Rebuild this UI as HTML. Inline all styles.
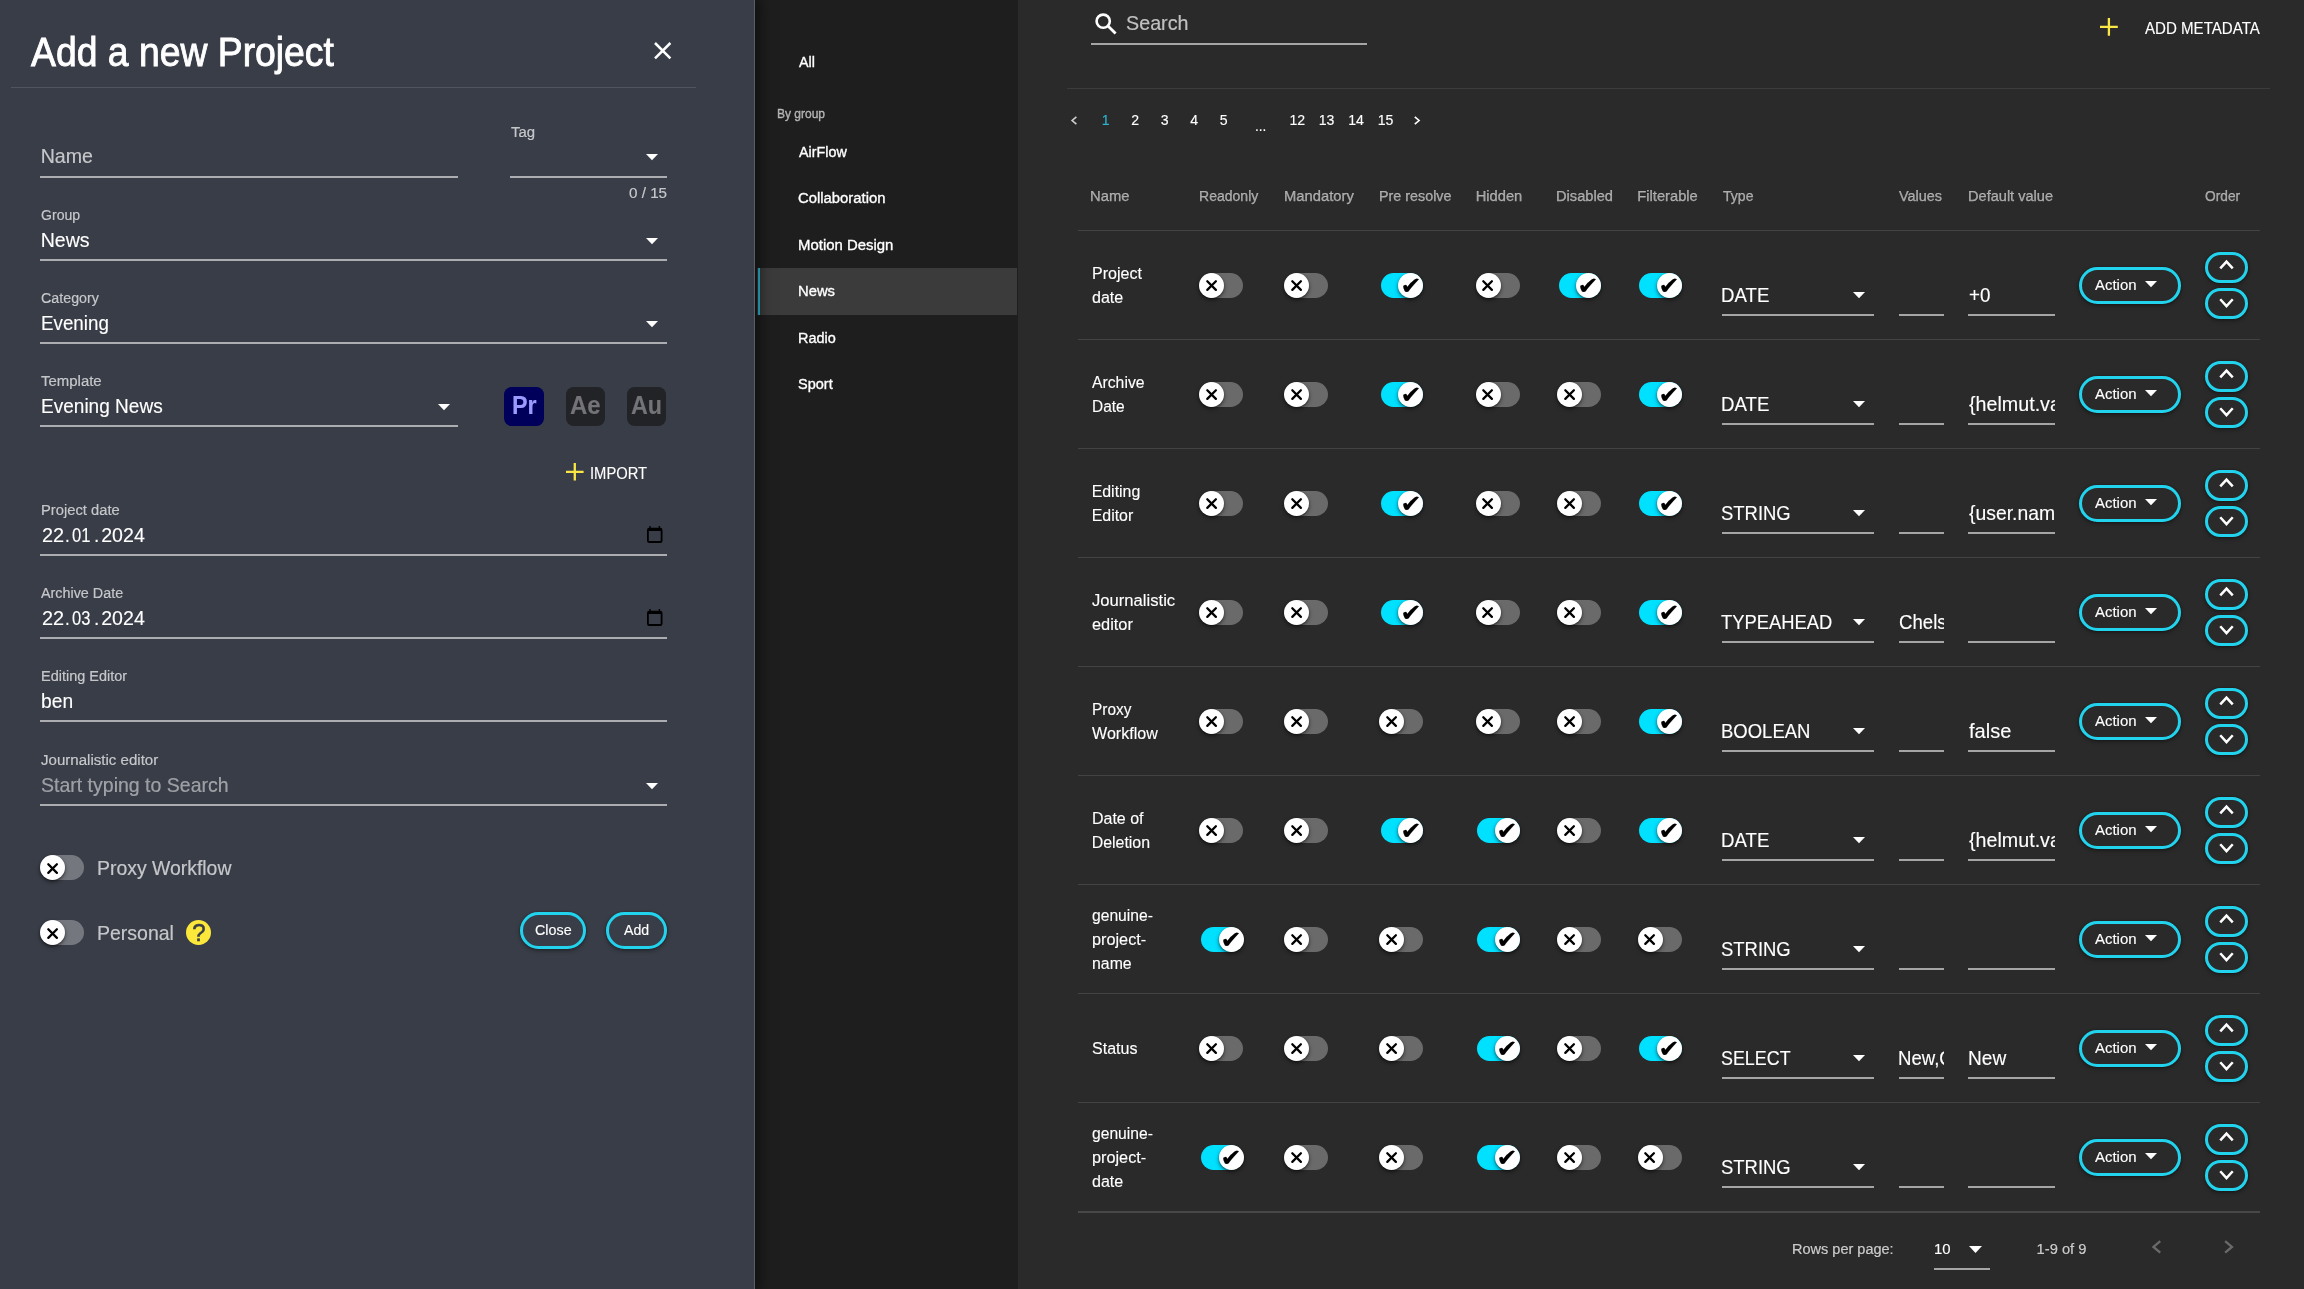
<!DOCTYPE html>
<html lang="en"><head><meta charset="utf-8"><title>Add a new Project</title>
<style>
html,body{margin:0;padding:0;background:#2a2a2a;}
body{width:2304px;height:1289px;position:relative;overflow:hidden;font-family:"Liberation Sans",sans-serif;}
.b{position:absolute;display:block;}
.t{position:absolute;white-space:nowrap;line-height:1;transform-origin:0 50%;-webkit-text-stroke:.12px currentColor;}
#w{position:absolute;left:0;top:0;width:2304px;height:1289px;overflow:hidden;will-change:transform;}
.g{font-family:"DejaVu Sans",sans-serif;}
svg{overflow:visible}
</style></head>
<body>
<div id="w">
<div class="b" style="left:0.00px;top:0.00px;width:2304.00px;height:1289.00px;background:#2a2a2a;"></div>
<div class="b" style="left:755.00px;top:0.00px;width:262.50px;height:1289.00px;background:#1e1e1e;"></div>
<div class="b" style="left:757.30px;top:268.00px;width:260.20px;height:46.70px;background:#3b3b3b;"></div>
<div class="b" style="left:757.80px;top:268.00px;width:2.50px;height:46.70px;background:#2dbcd8;"></div>
<div class="b" style="left:0.00px;top:0.00px;width:754.30px;height:1289.00px;background:#393d47;box-shadow:0 0 14px 4px rgba(0,0,0,.55);border-right:1px solid #5b5e66;"></div>
<span class="t" style="left:30.60px;top:32.00px;font-size:40.8px;color:#fff;transform:scaleX(0.9148);-webkit-text-stroke:0.9px #fff;">Add a new Project</span>
<svg class="b" style="left:653.50px;top:42.30px;" width="17.40" height="17.40" viewBox="0 0 17.40 17.40"><path d="M1 1L16.4 16.4M16.4 1L1 16.4" stroke="#fff" stroke-width="2.5" fill="none"/></svg>
<div class="b" style="left:11.00px;top:87.00px;width:685.00px;height:1.00px;background:rgba(255,255,255,.12);"></div>
<div class="b" style="left:40.00px;top:176.00px;width:418.00px;height:2.00px;background:rgba(255,255,255,.58);"></div>
<span class="t" style="left:40.67px;top:147.00px;font-size:19.58px;color:rgba(255,255,255,.7);">Name</span>
<div class="b" style="left:510.00px;top:176.00px;width:157.00px;height:2.00px;background:rgba(255,255,255,.58);"></div>
<span class="t" style="left:511.10px;top:125.00px;font-size:14.69px;color:rgba(255,255,255,.7);transform:scaleX(1.0189);">Tag</span>
<svg class="b" style="left:646.20px;top:153.95px" width="12" height="6.3" viewBox="0 0 12 6.3"><path d="M0 0H12L6.0 6.3Z" fill="#fff"/></svg>
<span class="t" style="left:629.17px;top:186.00px;font-size:14.69px;color:rgba(255,255,255,.7);transform:scaleX(1.0358);">0 / 15</span>
<div class="b" style="left:40.00px;top:259.00px;width:627.00px;height:2.00px;background:rgba(255,255,255,.58);"></div>
<span class="t" style="left:40.86px;top:208.00px;font-size:14.69px;color:rgba(255,255,255,.7);transform:scaleX(0.9600);">Group</span>
<span class="t" style="left:40.67px;top:231.00px;font-size:19.58px;color:#fff;">News</span>
<svg class="b" style="left:646.20px;top:237.55px" width="12" height="6.3" viewBox="0 0 12 6.3"><path d="M0 0H12L6.0 6.3Z" fill="#fff"/></svg>
<div class="b" style="left:40.00px;top:342.00px;width:627.00px;height:2.00px;background:rgba(255,255,255,.58);"></div>
<span class="t" style="left:40.85px;top:291.00px;font-size:14.69px;color:rgba(255,255,255,.7);transform:scaleX(0.9716);">Category</span>
<span class="t" style="left:40.73px;top:314.00px;font-size:19.58px;color:#fff;transform:scaleX(0.9592);">Evening</span>
<svg class="b" style="left:646.20px;top:320.55px" width="12" height="6.3" viewBox="0 0 12 6.3"><path d="M0 0H12L6.0 6.3Z" fill="#fff"/></svg>
<div class="b" style="left:40.00px;top:425.00px;width:418.00px;height:2.00px;background:rgba(255,255,255,.58);"></div>
<span class="t" style="left:40.76px;top:374.00px;font-size:14.69px;color:rgba(255,255,255,.7);transform:scaleX(1.0180);">Template</span>
<span class="t" style="left:40.71px;top:397.00px;font-size:19.58px;color:#fff;transform:scaleX(0.9723);">Evening News</span>
<svg class="b" style="left:437.70px;top:403.55px" width="12" height="6.3" viewBox="0 0 12 6.3"><path d="M0 0H12L6.0 6.3Z" fill="#fff"/></svg>
<div class="b" style="left:504.10px;top:387.00px;width:39.60px;height:38.50px;background:#00005b;border-radius:7.5px;"></div>
<span class="t" style="left:512.08px;top:393.00px;font-size:25.6px;color:#9b9bff;transform:scaleX(0.9135);font-weight:700;">Pr</span>
<div class="b" style="left:565.60px;top:387.00px;width:39.20px;height:38.50px;background:#222327;border-radius:7.5px;"></div>
<span class="t" style="left:569.90px;top:393.00px;font-size:25.6px;color:#737378;transform:scaleX(0.9381);font-weight:700;">Ae</span>
<div class="b" style="left:626.60px;top:387.00px;width:39.20px;height:38.50px;background:#222327;border-radius:7.5px;"></div>
<span class="t" style="left:630.62px;top:393.00px;font-size:25.6px;color:#737378;transform:scaleX(0.9104);font-weight:700;">Au</span>
<svg class="b" style="left:566.20px;top:462.50px;" width="17.60" height="17.60" viewBox="0 0 17.60 17.60"><path d="M8.8 0V17.6M0 8.8H17.6" stroke="#f8e745" stroke-width="2.3" fill="none"/></svg>
<span class="t" style="left:590.17px;top:465.00px;font-size:16.12px;color:#fff;transform:scaleX(0.9157);">IMPORT</span>
<div class="b" style="left:40.00px;top:554.00px;width:627.00px;height:2.00px;background:rgba(255,255,255,.58);"></div>
<span class="t" style="left:40.67px;top:503.00px;font-size:14.69px;color:rgba(255,255,255,.7);transform:scaleX(1.0044);">Project date</span>
<span class="t" style="left:41.90px;top:526.00px;font-size:19.58px;color:#fff;transform:scaleX(1.0164);">22</span>
<span class="t" style="left:65.47px;top:526.00px;font-size:19.58px;color:#fff;transform:scaleX(0.8682);">.</span>
<span class="t" style="left:71.82px;top:526.00px;font-size:19.58px;color:#fff;transform:scaleX(0.8479);">01</span>
<span class="t" style="left:94.39px;top:526.00px;font-size:19.58px;color:#fff;transform:scaleX(0.9704);">.</span>
<span class="t" style="left:101.22px;top:526.00px;font-size:19.58px;color:#fff;">2024</span>
<svg class="b" style="left:647.30px;top:526.00px;" width="15.50" height="17.00" viewBox="0 0 15.50 17.00"><path fill-rule="evenodd" fill="#000" d="M2.2 1.7H13.3A2.2 2.2 0 0 1 15.5 3.9V14.7A2.2 2.2 0 0 1 13.3 16.9H2.2A2.2 2.2 0 0 1 0 14.7V3.9A2.2 2.2 0 0 1 2.2 1.7ZM1.8 5V14.6A.5 .5 0 0 0 2.3 15.1H13.2A.5 .5 0 0 0 13.7 14.6V5Z"/><path d="M2.3 0H3.7V2.5H2.3ZM11.7 0H13.1V2.5H11.7Z" fill="#000"/></svg>
<div class="b" style="left:40.00px;top:637.00px;width:627.00px;height:2.00px;background:rgba(255,255,255,.58);"></div>
<span class="t" style="left:40.92px;top:586.00px;font-size:14.69px;color:rgba(255,255,255,.7);transform:scaleX(0.9769);">Archive Date</span>
<span class="t" style="left:41.90px;top:609.00px;font-size:19.58px;color:#fff;transform:scaleX(1.0164);">22</span>
<span class="t" style="left:65.47px;top:609.00px;font-size:19.58px;color:#fff;transform:scaleX(0.8682);">.</span>
<span class="t" style="left:71.82px;top:609.00px;font-size:19.58px;color:#fff;transform:scaleX(0.8438);">03</span>
<span class="t" style="left:94.39px;top:609.00px;font-size:19.58px;color:#fff;transform:scaleX(0.9704);">.</span>
<span class="t" style="left:101.22px;top:609.00px;font-size:19.58px;color:#fff;">2024</span>
<svg class="b" style="left:647.30px;top:609.00px;" width="15.50" height="17.00" viewBox="0 0 15.50 17.00"><path fill-rule="evenodd" fill="#000" d="M2.2 1.7H13.3A2.2 2.2 0 0 1 15.5 3.9V14.7A2.2 2.2 0 0 1 13.3 16.9H2.2A2.2 2.2 0 0 1 0 14.7V3.9A2.2 2.2 0 0 1 2.2 1.7ZM1.8 5V14.6A.5 .5 0 0 0 2.3 15.1H13.2A.5 .5 0 0 0 13.7 14.6V5Z"/><path d="M2.3 0H3.7V2.5H2.3ZM11.7 0H13.1V2.5H11.7Z" fill="#000"/></svg>
<div class="b" style="left:40.00px;top:720.00px;width:627.00px;height:2.00px;background:rgba(255,255,255,.58);"></div>
<span class="t" style="left:40.69px;top:669.00px;font-size:14.69px;color:rgba(255,255,255,.7);transform:scaleX(0.9865);">Editing Editor</span>
<span class="t" style="left:40.79px;top:692.00px;font-size:19.58px;color:#fff;transform:scaleX(0.9835);">ben</span>
<div class="b" style="left:40.00px;top:804.00px;width:627.00px;height:2.00px;background:rgba(255,255,255,.58);"></div>
<span class="t" style="left:40.83px;top:753.00px;font-size:14.69px;color:rgba(255,255,255,.7);transform:scaleX(1.0256);">Journalistic editor</span>
<span class="t" style="left:40.59px;top:776.00px;font-size:19.58px;color:rgba(255,255,255,.5);transform:scaleX(0.9964);">Start typing to Search</span>
<svg class="b" style="left:646.20px;top:782.55px" width="12" height="6.3" viewBox="0 0 12 6.3"><path d="M0 0H12L6.0 6.3Z" fill="#fff"/></svg>
<div class="b" style="left:41.00px;top:855.40px;width:43.00px;height:24.60px;background:rgba(255,255,255,.3);border-radius:13px;"></div>
<div class="b" style="left:40.10px;top:855.20px;width:25.00px;height:25.00px;background:#fff;border-radius:50%;box-shadow:0 2px 4px rgba(0,0,0,.45),0 1px 2px rgba(0,0,0,.3);"></div>
<svg class="b" style="left:46.70px;top:862.60px;" width="11.20" height="11.20" viewBox="0 0 11.20 11.20"><path d="M1.3 1.3L9.9 9.9M9.9 1.3L1.3 9.9" stroke="#000" stroke-width="2.3" stroke-linecap="round" fill="none"/></svg>
<span class="t" style="left:96.65px;top:859.00px;font-size:19.58px;color:rgba(255,255,255,.7);transform:scaleX(0.9909);">Proxy Workflow</span>
<div class="b" style="left:41.00px;top:920.40px;width:43.00px;height:24.60px;background:rgba(255,255,255,.3);border-radius:13px;"></div>
<div class="b" style="left:40.10px;top:920.20px;width:25.00px;height:25.00px;background:#fff;border-radius:50%;box-shadow:0 2px 4px rgba(0,0,0,.45),0 1px 2px rgba(0,0,0,.3);"></div>
<svg class="b" style="left:46.70px;top:927.60px;" width="11.20" height="11.20" viewBox="0 0 11.20 11.20"><path d="M1.3 1.3L9.9 9.9M9.9 1.3L1.3 9.9" stroke="#000" stroke-width="2.3" stroke-linecap="round" fill="none"/></svg>
<span class="t" style="left:96.64px;top:924.00px;font-size:19.58px;color:rgba(255,255,255,.7);transform:scaleX(0.9959);">Personal</span>
<div class="b" style="left:186.30px;top:919.80px;width:25.00px;height:25.00px;background:#fbe83a;border-radius:50%;"></div>
<span class="t" style="left:192.19px;top:921.00px;font-size:23.97px;color:#393d47;-webkit-text-stroke:0.5px #393d47;">?</span>
<div class="b" style="left:519.90px;top:911.60px;width:66.60px;height:37.50px;background:transparent;border:3px solid #22d3ee;border-radius:18.8px;box-sizing:border-box;box-shadow:0 2px 4px rgba(0,0,0,.35),0 0 2px rgba(0,0,0,.4);"></div>
<span class="t" style="left:535.08px;top:923.00px;font-size:14.69px;color:#fff;transform:scaleX(0.9748);">Close</span>
<div class="b" style="left:606.00px;top:911.60px;width:61.20px;height:37.50px;background:transparent;border:3px solid #22d3ee;border-radius:18.8px;box-sizing:border-box;box-shadow:0 2px 4px rgba(0,0,0,.35),0 0 2px rgba(0,0,0,.4);"></div>
<span class="t" style="left:624.40px;top:923.00px;font-size:14.69px;color:#fff;transform:scaleX(0.9657);">Add</span>
<span class="t" style="left:799.00px;top:54.00px;font-size:14.99px;color:#fff;transform:scaleX(0.9576);-webkit-text-stroke:0.35px #fff;">All</span>
<span class="t" style="left:777.24px;top:107.00px;font-size:13.46px;color:rgba(255,255,255,.58);transform:scaleX(0.8923);-webkit-text-stroke:0.35px rgba(255,255,255,.58);">By group</span>
<span class="t" style="left:799.00px;top:144.00px;font-size:14.99px;color:#fff;transform:scaleX(0.9562);-webkit-text-stroke:0.35px #fff;">AirFlow</span>
<span class="t" style="left:798.26px;top:190.00px;font-size:14.99px;color:#fff;transform:scaleX(0.9903);-webkit-text-stroke:0.35px #fff;">Collaboration</span>
<span class="t" style="left:797.81px;top:237.00px;font-size:14.99px;color:#fff;transform:scaleX(0.9959);-webkit-text-stroke:0.35px #fff;">Motion Design</span>
<span class="t" style="left:797.82px;top:283.00px;font-size:14.99px;color:#fff;transform:scaleX(0.9874);-webkit-text-stroke:0.35px #fff;">News</span>
<span class="t" style="left:797.84px;top:330.00px;font-size:14.99px;color:#fff;transform:scaleX(0.9645);-webkit-text-stroke:0.35px #fff;">Radio</span>
<span class="t" style="left:798.35px;top:376.00px;font-size:14.99px;color:#fff;transform:scaleX(0.9685);-webkit-text-stroke:0.35px #fff;">Sport</span>
<svg class="b" style="left:1094.50px;top:12.80px;" width="22.00" height="22.00" viewBox="0 0 22.00 22.00"><circle cx="8.2" cy="8.2" r="6.6" fill="none" stroke="#fff" stroke-width="2.6"/><path d="M13 13L20.6 20.6" stroke="#fff" stroke-width="2.8"/></svg>
<span class="t" style="left:1126.01px;top:14.00px;font-size:19.58px;color:rgba(255,255,255,.7);transform:scaleX(1.0081);">Search</span>
<div class="b" style="left:1091.00px;top:43.00px;width:276.00px;height:2.00px;background:rgba(255,255,255,.58);"></div>
<svg class="b" style="left:2100.40px;top:18.10px;" width="17.80" height="17.80" viewBox="0 0 17.80 17.80"><path d="M8.9 0V17.8M0 8.9H17.8" stroke="#f8e745" stroke-width="2.3" fill="none"/></svg>
<span class="t" style="left:2144.60px;top:21.00px;font-size:15.81px;color:#fff;transform:scaleX(0.9550);">ADD METADATA</span>
<div class="b" style="left:1067.00px;top:88.00px;width:1203.00px;height:1.00px;background:rgba(255,255,255,.085);"></div>
<svg class="b" style="left:1071.10px;top:115.90px;" width="6.20" height="9.00" viewBox="0 0 6.20 9.00"><path d="M5.40 0.80L1.10 4.50L5.40 8.20" fill="none" stroke="#cfcfcf" stroke-width="1.6"/></svg>
<svg class="b" style="left:1414.00px;top:115.90px;" width="6.20" height="9.00" viewBox="0 0 6.20 9.00"><path d="M0.80 0.80L5.10 4.50L0.80 8.20" fill="none" stroke="#fff" stroke-width="1.6"/></svg>
<span class="t" style="left:1101.68px;top:113.00px;font-size:14.08px;color:#2cb5d2;">1</span>
<span class="t" style="left:1131.36px;top:113.00px;font-size:14.08px;color:#fff;">2</span>
<span class="t" style="left:1160.83px;top:113.00px;font-size:14.08px;color:#fff;">3</span>
<span class="t" style="left:1190.33px;top:113.00px;font-size:14.08px;color:#fff;">4</span>
<span class="t" style="left:1219.79px;top:113.00px;font-size:14.08px;color:#fff;">5</span>
<span class="t" style="left:1289.47px;top:113.00px;font-size:14.08px;color:#fff;">12</span>
<span class="t" style="left:1318.64px;top:113.00px;font-size:14.08px;color:#fff;">13</span>
<span class="t" style="left:1348.13px;top:113.00px;font-size:14.08px;color:#fff;">14</span>
<span class="t" style="left:1377.74px;top:113.00px;font-size:14.08px;color:#fff;">15</span>
<span class="t" style="left:1254.98px;top:119.00px;font-size:14.08px;color:#fff;transform:scaleX(0.9650);">...</span>
<span class="t" style="left:1089.82px;top:189.00px;font-size:14.69px;color:rgba(255,255,255,.55);transform:scaleX(1.0057);-webkit-text-stroke:0.25px rgba(255,255,255,.55);">Name</span>
<span class="t" style="left:1199.28px;top:189.00px;font-size:14.69px;color:rgba(255,255,255,.55);transform:scaleX(0.9558);-webkit-text-stroke:0.25px rgba(255,255,255,.55);">Readonly</span>
<span class="t" style="left:1283.72px;top:189.00px;font-size:14.69px;color:rgba(255,255,255,.55);transform:scaleX(1.0053);-webkit-text-stroke:0.25px rgba(255,255,255,.55);">Mandatory</span>
<span class="t" style="left:1378.75px;top:189.00px;font-size:14.69px;color:rgba(255,255,255,.55);transform:scaleX(0.9752);-webkit-text-stroke:0.25px rgba(255,255,255,.55);">Pre resolve</span>
<span class="t" style="left:1475.72px;top:189.00px;font-size:14.69px;color:rgba(255,255,255,.55);-webkit-text-stroke:0.25px rgba(255,255,255,.55);">Hidden</span>
<span class="t" style="left:1556.23px;top:189.00px;font-size:14.69px;color:rgba(255,255,255,.55);transform:scaleX(0.9966);-webkit-text-stroke:0.25px rgba(255,255,255,.55);">Disabled</span>
<span class="t" style="left:1637.33px;top:189.00px;font-size:14.69px;color:rgba(255,255,255,.55);-webkit-text-stroke:0.25px rgba(255,255,255,.55);">Filterable</span>
<span class="t" style="left:1722.92px;top:189.00px;font-size:14.69px;color:rgba(255,255,255,.55);transform:scaleX(0.9572);-webkit-text-stroke:0.25px rgba(255,255,255,.55);">Type</span>
<span class="t" style="left:1899.33px;top:189.00px;font-size:14.69px;color:rgba(255,255,255,.55);transform:scaleX(0.9801);-webkit-text-stroke:0.25px rgba(255,255,255,.55);">Values</span>
<span class="t" style="left:1968.33px;top:189.00px;font-size:14.69px;color:rgba(255,255,255,.55);transform:scaleX(0.9922);-webkit-text-stroke:0.25px rgba(255,255,255,.55);">Default value</span>
<span class="t" style="left:2204.78px;top:189.00px;font-size:14.69px;color:rgba(255,255,255,.55);transform:scaleX(0.9367);-webkit-text-stroke:0.25px rgba(255,255,255,.55);">Order</span>
<div class="b" style="left:1078.00px;top:230.00px;width:1182.00px;height:1.00px;background:rgba(255,255,255,.12);"></div>
<div class="b" style="left:1078.00px;top:339.00px;width:1182.00px;height:1.00px;background:rgba(255,255,255,.12);"></div>
<span class="t" style="left:1091.66px;top:266.00px;font-size:15.91px;color:#fff;transform:scaleX(1.0103);">Project</span>
<span class="t" style="left:1091.76px;top:290.00px;font-size:15.91px;color:#fff;transform:scaleX(1.0086);">date</span>
<div class="b" style="left:1200.30px;top:273.00px;width:43.00px;height:24.60px;background:rgba(255,255,255,.3);border-radius:13px;"></div>
<div class="b" style="left:1199.40px;top:272.80px;width:25.00px;height:25.00px;background:#fff;border-radius:50%;box-shadow:0 2px 4px rgba(0,0,0,.45),0 1px 2px rgba(0,0,0,.3);"></div>
<svg class="b" style="left:1206.00px;top:280.20px;" width="11.20" height="11.20" viewBox="0 0 11.20 11.20"><path d="M1.3 1.3L9.9 9.9M9.9 1.3L1.3 9.9" stroke="#000" stroke-width="2.3" stroke-linecap="round" fill="none"/></svg>
<div class="b" style="left:1285.00px;top:273.00px;width:43.00px;height:24.60px;background:rgba(255,255,255,.3);border-radius:13px;"></div>
<div class="b" style="left:1284.10px;top:272.80px;width:25.00px;height:25.00px;background:#fff;border-radius:50%;box-shadow:0 2px 4px rgba(0,0,0,.45),0 1px 2px rgba(0,0,0,.3);"></div>
<svg class="b" style="left:1290.70px;top:280.20px;" width="11.20" height="11.20" viewBox="0 0 11.20 11.20"><path d="M1.3 1.3L9.9 9.9M9.9 1.3L1.3 9.9" stroke="#000" stroke-width="2.3" stroke-linecap="round" fill="none"/></svg>
<div class="b" style="left:1380.80px;top:272.70px;width:42.20px;height:25.20px;background:#00e0ff;border-radius:13px;"></div>
<div class="b" style="left:1398.20px;top:272.80px;width:25.00px;height:25.00px;background:#fff;border-radius:50%;box-shadow:0 2px 4px rgba(0,0,0,.45),0 1px 2px rgba(0,0,0,.3);"></div>
<span class="t g" style="left:1400.60px;top:273.70px;font-size:24px;color:#000;transform-origin:50% 50%;transform:scaleX(1.07)">✔</span>
<div class="b" style="left:1476.60px;top:273.00px;width:43.00px;height:24.60px;background:rgba(255,255,255,.3);border-radius:13px;"></div>
<div class="b" style="left:1475.70px;top:272.80px;width:25.00px;height:25.00px;background:#fff;border-radius:50%;box-shadow:0 2px 4px rgba(0,0,0,.45),0 1px 2px rgba(0,0,0,.3);"></div>
<svg class="b" style="left:1482.30px;top:280.20px;" width="11.20" height="11.20" viewBox="0 0 11.20 11.20"><path d="M1.3 1.3L9.9 9.9M9.9 1.3L1.3 9.9" stroke="#000" stroke-width="2.3" stroke-linecap="round" fill="none"/></svg>
<div class="b" style="left:1558.60px;top:272.70px;width:42.20px;height:25.20px;background:#00e0ff;border-radius:13px;"></div>
<div class="b" style="left:1576.00px;top:272.80px;width:25.00px;height:25.00px;background:#fff;border-radius:50%;box-shadow:0 2px 4px rgba(0,0,0,.45),0 1px 2px rgba(0,0,0,.3);"></div>
<span class="t g" style="left:1578.40px;top:273.70px;font-size:24px;color:#000;transform-origin:50% 50%;transform:scaleX(1.07)">✔</span>
<div class="b" style="left:1639.40px;top:272.70px;width:42.20px;height:25.20px;background:#00e0ff;border-radius:13px;"></div>
<div class="b" style="left:1656.80px;top:272.80px;width:25.00px;height:25.00px;background:#fff;border-radius:50%;box-shadow:0 2px 4px rgba(0,0,0,.45),0 1px 2px rgba(0,0,0,.3);"></div>
<span class="t g" style="left:1659.20px;top:273.70px;font-size:24px;color:#000;transform-origin:50% 50%;transform:scaleX(1.07)">✔</span>
<span class="t" style="left:1721.24px;top:286.00px;font-size:19.58px;color:#fff;transform:scaleX(0.9525);">DATE</span>
<svg class="b" style="left:1853.30px;top:292.15px" width="12" height="6.3" viewBox="0 0 12 6.3"><path d="M0 0H12L6.0 6.3Z" fill="#fff"/></svg>
<div class="b" style="left:1722.00px;top:314.00px;width:152.00px;height:2.00px;background:rgba(255,255,255,.58);"></div>
<div class="b" style="left:1899.00px;top:314.00px;width:45.00px;height:2.00px;background:rgba(255,255,255,.58);"></div>
<div class="b" style="left:1968.00px;top:314.00px;width:87.00px;height:2.00px;background:rgba(255,255,255,.58);"></div>
<div class="b" style="left:1968.3px;top:277.00px;width:86.8px;height:34px;overflow:hidden">
<span class="t" style="left:0.36px;top:9.00px;font-size:19.58px;color:#fff;transform:scaleX(0.9579);">+0</span>
</div>
<div class="b" style="left:2079.10px;top:266.50px;width:102.20px;height:37.50px;background:transparent;border:3px solid #22d3ee;border-radius:18.8px;box-sizing:border-box;box-shadow:0 2px 4px rgba(0,0,0,.35),0 0 2px rgba(0,0,0,.4);"></div>
<span class="t" style="left:2094.90px;top:278.00px;font-size:14.89px;color:#fff;transform:scaleX(1.0049);">Action</span>
<svg class="b" style="left:2144.70px;top:281.05px" width="12" height="6.3" viewBox="0 0 12 6.3"><path d="M0 0H12L6.0 6.3Z" fill="#fff"/></svg>
<div class="b" style="left:2204.80px;top:251.50px;width:43.30px;height:31.20px;background:transparent;border:3px solid #22d3ee;border-radius:15.6px;box-sizing:border-box;box-shadow:0 2px 4px rgba(0,0,0,.35),0 0 2px rgba(0,0,0,.4);"></div>
<svg class="b" style="left:2218.80px;top:259.80px;" width="15.00" height="9.60" viewBox="0 0 15.00 9.60"><path d="M1.25 8.35L7.50 1.55L13.75 8.35" fill="none" stroke="#fff" stroke-width="2.5"/></svg>
<div class="b" style="left:2204.80px;top:287.90px;width:43.30px;height:31.40px;background:transparent;border:3px solid #22d3ee;border-radius:15.7px;box-sizing:border-box;box-shadow:0 2px 4px rgba(0,0,0,.35),0 0 2px rgba(0,0,0,.4);"></div>
<svg class="b" style="left:2218.80px;top:297.50px;" width="15.00" height="9.60" viewBox="0 0 15.00 9.60"><path d="M1.25 1.25L7.50 8.05L13.75 1.25" fill="none" stroke="#fff" stroke-width="2.5"/></svg>
<div class="b" style="left:1078.00px;top:448.00px;width:1182.00px;height:1.00px;background:rgba(255,255,255,.12);"></div>
<span class="t" style="left:1091.93px;top:375.00px;font-size:15.91px;color:#fff;transform:scaleX(0.9900);">Archive</span>
<span class="t" style="left:1091.71px;top:399.00px;font-size:15.91px;color:#fff;transform:scaleX(0.9724);">Date</span>
<div class="b" style="left:1200.30px;top:382.00px;width:43.00px;height:24.60px;background:rgba(255,255,255,.3);border-radius:13px;"></div>
<div class="b" style="left:1199.40px;top:381.80px;width:25.00px;height:25.00px;background:#fff;border-radius:50%;box-shadow:0 2px 4px rgba(0,0,0,.45),0 1px 2px rgba(0,0,0,.3);"></div>
<svg class="b" style="left:1206.00px;top:389.20px;" width="11.20" height="11.20" viewBox="0 0 11.20 11.20"><path d="M1.3 1.3L9.9 9.9M9.9 1.3L1.3 9.9" stroke="#000" stroke-width="2.3" stroke-linecap="round" fill="none"/></svg>
<div class="b" style="left:1285.00px;top:382.00px;width:43.00px;height:24.60px;background:rgba(255,255,255,.3);border-radius:13px;"></div>
<div class="b" style="left:1284.10px;top:381.80px;width:25.00px;height:25.00px;background:#fff;border-radius:50%;box-shadow:0 2px 4px rgba(0,0,0,.45),0 1px 2px rgba(0,0,0,.3);"></div>
<svg class="b" style="left:1290.70px;top:389.20px;" width="11.20" height="11.20" viewBox="0 0 11.20 11.20"><path d="M1.3 1.3L9.9 9.9M9.9 1.3L1.3 9.9" stroke="#000" stroke-width="2.3" stroke-linecap="round" fill="none"/></svg>
<div class="b" style="left:1380.80px;top:381.70px;width:42.20px;height:25.20px;background:#00e0ff;border-radius:13px;"></div>
<div class="b" style="left:1398.20px;top:381.80px;width:25.00px;height:25.00px;background:#fff;border-radius:50%;box-shadow:0 2px 4px rgba(0,0,0,.45),0 1px 2px rgba(0,0,0,.3);"></div>
<span class="t g" style="left:1400.60px;top:382.70px;font-size:24px;color:#000;transform-origin:50% 50%;transform:scaleX(1.07)">✔</span>
<div class="b" style="left:1476.60px;top:382.00px;width:43.00px;height:24.60px;background:rgba(255,255,255,.3);border-radius:13px;"></div>
<div class="b" style="left:1475.70px;top:381.80px;width:25.00px;height:25.00px;background:#fff;border-radius:50%;box-shadow:0 2px 4px rgba(0,0,0,.45),0 1px 2px rgba(0,0,0,.3);"></div>
<svg class="b" style="left:1482.30px;top:389.20px;" width="11.20" height="11.20" viewBox="0 0 11.20 11.20"><path d="M1.3 1.3L9.9 9.9M9.9 1.3L1.3 9.9" stroke="#000" stroke-width="2.3" stroke-linecap="round" fill="none"/></svg>
<div class="b" style="left:1557.80px;top:382.00px;width:43.00px;height:24.60px;background:rgba(255,255,255,.3);border-radius:13px;"></div>
<div class="b" style="left:1556.90px;top:381.80px;width:25.00px;height:25.00px;background:#fff;border-radius:50%;box-shadow:0 2px 4px rgba(0,0,0,.45),0 1px 2px rgba(0,0,0,.3);"></div>
<svg class="b" style="left:1563.50px;top:389.20px;" width="11.20" height="11.20" viewBox="0 0 11.20 11.20"><path d="M1.3 1.3L9.9 9.9M9.9 1.3L1.3 9.9" stroke="#000" stroke-width="2.3" stroke-linecap="round" fill="none"/></svg>
<div class="b" style="left:1639.40px;top:381.70px;width:42.20px;height:25.20px;background:#00e0ff;border-radius:13px;"></div>
<div class="b" style="left:1656.80px;top:381.80px;width:25.00px;height:25.00px;background:#fff;border-radius:50%;box-shadow:0 2px 4px rgba(0,0,0,.45),0 1px 2px rgba(0,0,0,.3);"></div>
<span class="t g" style="left:1659.20px;top:382.70px;font-size:24px;color:#000;transform-origin:50% 50%;transform:scaleX(1.07)">✔</span>
<span class="t" style="left:1721.24px;top:395.00px;font-size:19.58px;color:#fff;transform:scaleX(0.9525);">DATE</span>
<svg class="b" style="left:1853.30px;top:401.15px" width="12" height="6.3" viewBox="0 0 12 6.3"><path d="M0 0H12L6.0 6.3Z" fill="#fff"/></svg>
<div class="b" style="left:1722.00px;top:423.00px;width:152.00px;height:2.00px;background:rgba(255,255,255,.58);"></div>
<div class="b" style="left:1899.00px;top:423.00px;width:45.00px;height:2.00px;background:rgba(255,255,255,.58);"></div>
<div class="b" style="left:1968.00px;top:423.00px;width:87.00px;height:2.00px;background:rgba(255,255,255,.58);"></div>
<div class="b" style="left:1968.3px;top:386.00px;width:86.8px;height:34px;overflow:hidden">
<span class="t" style="left:0.90px;top:9.00px;font-size:19.58px;color:#fff;transform:scaleX(1.0053);">{helmut.variable}</span>
</div>
<div class="b" style="left:2079.10px;top:375.50px;width:102.20px;height:37.50px;background:transparent;border:3px solid #22d3ee;border-radius:18.8px;box-sizing:border-box;box-shadow:0 2px 4px rgba(0,0,0,.35),0 0 2px rgba(0,0,0,.4);"></div>
<span class="t" style="left:2094.90px;top:387.00px;font-size:14.89px;color:#fff;transform:scaleX(1.0049);">Action</span>
<svg class="b" style="left:2144.70px;top:390.05px" width="12" height="6.3" viewBox="0 0 12 6.3"><path d="M0 0H12L6.0 6.3Z" fill="#fff"/></svg>
<div class="b" style="left:2204.80px;top:360.50px;width:43.30px;height:31.20px;background:transparent;border:3px solid #22d3ee;border-radius:15.6px;box-sizing:border-box;box-shadow:0 2px 4px rgba(0,0,0,.35),0 0 2px rgba(0,0,0,.4);"></div>
<svg class="b" style="left:2218.80px;top:368.80px;" width="15.00" height="9.60" viewBox="0 0 15.00 9.60"><path d="M1.25 8.35L7.50 1.55L13.75 8.35" fill="none" stroke="#fff" stroke-width="2.5"/></svg>
<div class="b" style="left:2204.80px;top:396.90px;width:43.30px;height:31.40px;background:transparent;border:3px solid #22d3ee;border-radius:15.7px;box-sizing:border-box;box-shadow:0 2px 4px rgba(0,0,0,.35),0 0 2px rgba(0,0,0,.4);"></div>
<svg class="b" style="left:2218.80px;top:406.50px;" width="15.00" height="9.60" viewBox="0 0 15.00 9.60"><path d="M1.25 1.25L7.50 8.05L13.75 1.25" fill="none" stroke="#fff" stroke-width="2.5"/></svg>
<div class="b" style="left:1078.00px;top:557.00px;width:1182.00px;height:1.00px;background:rgba(255,255,255,.12);"></div>
<span class="t" style="left:1091.67px;top:484.00px;font-size:15.91px;color:#fff;">Editing</span>
<span class="t" style="left:1091.68px;top:508.00px;font-size:15.91px;color:#fff;">Editor</span>
<div class="b" style="left:1200.30px;top:491.00px;width:43.00px;height:24.60px;background:rgba(255,255,255,.3);border-radius:13px;"></div>
<div class="b" style="left:1199.40px;top:490.80px;width:25.00px;height:25.00px;background:#fff;border-radius:50%;box-shadow:0 2px 4px rgba(0,0,0,.45),0 1px 2px rgba(0,0,0,.3);"></div>
<svg class="b" style="left:1206.00px;top:498.20px;" width="11.20" height="11.20" viewBox="0 0 11.20 11.20"><path d="M1.3 1.3L9.9 9.9M9.9 1.3L1.3 9.9" stroke="#000" stroke-width="2.3" stroke-linecap="round" fill="none"/></svg>
<div class="b" style="left:1285.00px;top:491.00px;width:43.00px;height:24.60px;background:rgba(255,255,255,.3);border-radius:13px;"></div>
<div class="b" style="left:1284.10px;top:490.80px;width:25.00px;height:25.00px;background:#fff;border-radius:50%;box-shadow:0 2px 4px rgba(0,0,0,.45),0 1px 2px rgba(0,0,0,.3);"></div>
<svg class="b" style="left:1290.70px;top:498.20px;" width="11.20" height="11.20" viewBox="0 0 11.20 11.20"><path d="M1.3 1.3L9.9 9.9M9.9 1.3L1.3 9.9" stroke="#000" stroke-width="2.3" stroke-linecap="round" fill="none"/></svg>
<div class="b" style="left:1380.80px;top:490.70px;width:42.20px;height:25.20px;background:#00e0ff;border-radius:13px;"></div>
<div class="b" style="left:1398.20px;top:490.80px;width:25.00px;height:25.00px;background:#fff;border-radius:50%;box-shadow:0 2px 4px rgba(0,0,0,.45),0 1px 2px rgba(0,0,0,.3);"></div>
<span class="t g" style="left:1400.60px;top:491.70px;font-size:24px;color:#000;transform-origin:50% 50%;transform:scaleX(1.07)">✔</span>
<div class="b" style="left:1476.60px;top:491.00px;width:43.00px;height:24.60px;background:rgba(255,255,255,.3);border-radius:13px;"></div>
<div class="b" style="left:1475.70px;top:490.80px;width:25.00px;height:25.00px;background:#fff;border-radius:50%;box-shadow:0 2px 4px rgba(0,0,0,.45),0 1px 2px rgba(0,0,0,.3);"></div>
<svg class="b" style="left:1482.30px;top:498.20px;" width="11.20" height="11.20" viewBox="0 0 11.20 11.20"><path d="M1.3 1.3L9.9 9.9M9.9 1.3L1.3 9.9" stroke="#000" stroke-width="2.3" stroke-linecap="round" fill="none"/></svg>
<div class="b" style="left:1557.80px;top:491.00px;width:43.00px;height:24.60px;background:rgba(255,255,255,.3);border-radius:13px;"></div>
<div class="b" style="left:1556.90px;top:490.80px;width:25.00px;height:25.00px;background:#fff;border-radius:50%;box-shadow:0 2px 4px rgba(0,0,0,.45),0 1px 2px rgba(0,0,0,.3);"></div>
<svg class="b" style="left:1563.50px;top:498.20px;" width="11.20" height="11.20" viewBox="0 0 11.20 11.20"><path d="M1.3 1.3L9.9 9.9M9.9 1.3L1.3 9.9" stroke="#000" stroke-width="2.3" stroke-linecap="round" fill="none"/></svg>
<div class="b" style="left:1639.40px;top:490.70px;width:42.20px;height:25.20px;background:#00e0ff;border-radius:13px;"></div>
<div class="b" style="left:1656.80px;top:490.80px;width:25.00px;height:25.00px;background:#fff;border-radius:50%;box-shadow:0 2px 4px rgba(0,0,0,.45),0 1px 2px rgba(0,0,0,.3);"></div>
<span class="t g" style="left:1659.20px;top:491.70px;font-size:24px;color:#000;transform-origin:50% 50%;transform:scaleX(1.07)">✔</span>
<span class="t" style="left:1721.14px;top:504.00px;font-size:19.58px;color:#fff;transform:scaleX(0.9424);">STRING</span>
<svg class="b" style="left:1853.30px;top:510.15px" width="12" height="6.3" viewBox="0 0 12 6.3"><path d="M0 0H12L6.0 6.3Z" fill="#fff"/></svg>
<div class="b" style="left:1722.00px;top:532.00px;width:152.00px;height:2.00px;background:rgba(255,255,255,.58);"></div>
<div class="b" style="left:1899.00px;top:532.00px;width:45.00px;height:2.00px;background:rgba(255,255,255,.58);"></div>
<div class="b" style="left:1968.00px;top:532.00px;width:87.00px;height:2.00px;background:rgba(255,255,255,.58);"></div>
<div class="b" style="left:1968.3px;top:495.00px;width:86.8px;height:34px;overflow:hidden">
<span class="t" style="left:0.91px;top:9.00px;font-size:19.58px;color:#fff;transform:scaleX(0.9897);">{user.name}</span>
</div>
<div class="b" style="left:2079.10px;top:484.50px;width:102.20px;height:37.50px;background:transparent;border:3px solid #22d3ee;border-radius:18.8px;box-sizing:border-box;box-shadow:0 2px 4px rgba(0,0,0,.35),0 0 2px rgba(0,0,0,.4);"></div>
<span class="t" style="left:2094.90px;top:496.00px;font-size:14.89px;color:#fff;transform:scaleX(1.0049);">Action</span>
<svg class="b" style="left:2144.70px;top:499.05px" width="12" height="6.3" viewBox="0 0 12 6.3"><path d="M0 0H12L6.0 6.3Z" fill="#fff"/></svg>
<div class="b" style="left:2204.80px;top:469.50px;width:43.30px;height:31.20px;background:transparent;border:3px solid #22d3ee;border-radius:15.6px;box-sizing:border-box;box-shadow:0 2px 4px rgba(0,0,0,.35),0 0 2px rgba(0,0,0,.4);"></div>
<svg class="b" style="left:2218.80px;top:477.80px;" width="15.00" height="9.60" viewBox="0 0 15.00 9.60"><path d="M1.25 8.35L7.50 1.55L13.75 8.35" fill="none" stroke="#fff" stroke-width="2.5"/></svg>
<div class="b" style="left:2204.80px;top:505.90px;width:43.30px;height:31.40px;background:transparent;border:3px solid #22d3ee;border-radius:15.7px;box-sizing:border-box;box-shadow:0 2px 4px rgba(0,0,0,.35),0 0 2px rgba(0,0,0,.4);"></div>
<svg class="b" style="left:2218.80px;top:515.50px;" width="15.00" height="9.60" viewBox="0 0 15.00 9.60"><path d="M1.25 1.25L7.50 8.05L13.75 1.25" fill="none" stroke="#fff" stroke-width="2.5"/></svg>
<div class="b" style="left:1078.00px;top:666.00px;width:1182.00px;height:1.00px;background:rgba(255,255,255,.12);"></div>
<span class="t" style="left:1091.84px;top:593.00px;font-size:15.91px;color:#fff;transform:scaleX(1.0450);">Journalistic</span>
<span class="t" style="left:1091.75px;top:617.00px;font-size:15.91px;color:#fff;transform:scaleX(1.0282);">editor</span>
<div class="b" style="left:1200.30px;top:600.00px;width:43.00px;height:24.60px;background:rgba(255,255,255,.3);border-radius:13px;"></div>
<div class="b" style="left:1199.40px;top:599.80px;width:25.00px;height:25.00px;background:#fff;border-radius:50%;box-shadow:0 2px 4px rgba(0,0,0,.45),0 1px 2px rgba(0,0,0,.3);"></div>
<svg class="b" style="left:1206.00px;top:607.20px;" width="11.20" height="11.20" viewBox="0 0 11.20 11.20"><path d="M1.3 1.3L9.9 9.9M9.9 1.3L1.3 9.9" stroke="#000" stroke-width="2.3" stroke-linecap="round" fill="none"/></svg>
<div class="b" style="left:1285.00px;top:600.00px;width:43.00px;height:24.60px;background:rgba(255,255,255,.3);border-radius:13px;"></div>
<div class="b" style="left:1284.10px;top:599.80px;width:25.00px;height:25.00px;background:#fff;border-radius:50%;box-shadow:0 2px 4px rgba(0,0,0,.45),0 1px 2px rgba(0,0,0,.3);"></div>
<svg class="b" style="left:1290.70px;top:607.20px;" width="11.20" height="11.20" viewBox="0 0 11.20 11.20"><path d="M1.3 1.3L9.9 9.9M9.9 1.3L1.3 9.9" stroke="#000" stroke-width="2.3" stroke-linecap="round" fill="none"/></svg>
<div class="b" style="left:1380.80px;top:599.70px;width:42.20px;height:25.20px;background:#00e0ff;border-radius:13px;"></div>
<div class="b" style="left:1398.20px;top:599.80px;width:25.00px;height:25.00px;background:#fff;border-radius:50%;box-shadow:0 2px 4px rgba(0,0,0,.45),0 1px 2px rgba(0,0,0,.3);"></div>
<span class="t g" style="left:1400.60px;top:600.70px;font-size:24px;color:#000;transform-origin:50% 50%;transform:scaleX(1.07)">✔</span>
<div class="b" style="left:1476.60px;top:600.00px;width:43.00px;height:24.60px;background:rgba(255,255,255,.3);border-radius:13px;"></div>
<div class="b" style="left:1475.70px;top:599.80px;width:25.00px;height:25.00px;background:#fff;border-radius:50%;box-shadow:0 2px 4px rgba(0,0,0,.45),0 1px 2px rgba(0,0,0,.3);"></div>
<svg class="b" style="left:1482.30px;top:607.20px;" width="11.20" height="11.20" viewBox="0 0 11.20 11.20"><path d="M1.3 1.3L9.9 9.9M9.9 1.3L1.3 9.9" stroke="#000" stroke-width="2.3" stroke-linecap="round" fill="none"/></svg>
<div class="b" style="left:1557.80px;top:600.00px;width:43.00px;height:24.60px;background:rgba(255,255,255,.3);border-radius:13px;"></div>
<div class="b" style="left:1556.90px;top:599.80px;width:25.00px;height:25.00px;background:#fff;border-radius:50%;box-shadow:0 2px 4px rgba(0,0,0,.45),0 1px 2px rgba(0,0,0,.3);"></div>
<svg class="b" style="left:1563.50px;top:607.20px;" width="11.20" height="11.20" viewBox="0 0 11.20 11.20"><path d="M1.3 1.3L9.9 9.9M9.9 1.3L1.3 9.9" stroke="#000" stroke-width="2.3" stroke-linecap="round" fill="none"/></svg>
<div class="b" style="left:1639.40px;top:599.70px;width:42.20px;height:25.20px;background:#00e0ff;border-radius:13px;"></div>
<div class="b" style="left:1656.80px;top:599.80px;width:25.00px;height:25.00px;background:#fff;border-radius:50%;box-shadow:0 2px 4px rgba(0,0,0,.45),0 1px 2px rgba(0,0,0,.3);"></div>
<span class="t g" style="left:1659.20px;top:600.70px;font-size:24px;color:#000;transform-origin:50% 50%;transform:scaleX(1.07)">✔</span>
<span class="t" style="left:1721.31px;top:613.00px;font-size:19.58px;color:#fff;transform:scaleX(0.9381);">TYPEAHEAD</span>
<svg class="b" style="left:1853.30px;top:619.15px" width="12" height="6.3" viewBox="0 0 12 6.3"><path d="M0 0H12L6.0 6.3Z" fill="#fff"/></svg>
<div class="b" style="left:1722.00px;top:641.00px;width:152.00px;height:2.00px;background:rgba(255,255,255,.58);"></div>
<div class="b" style="left:1899.00px;top:641.00px;width:45.00px;height:2.00px;background:rgba(255,255,255,.58);"></div>
<div class="b" style="left:1968.00px;top:641.00px;width:87.00px;height:2.00px;background:rgba(255,255,255,.58);"></div>
<div class="b" style="left:1898.7px;top:604.00px;width:45.6px;height:34px;overflow:hidden">
<span class="t" style="left:-0.03px;top:9.00px;font-size:19.58px;color:#fff;transform:scaleX(0.9502);">Chelsea</span>
</div>
<div class="b" style="left:2079.10px;top:593.50px;width:102.20px;height:37.50px;background:transparent;border:3px solid #22d3ee;border-radius:18.8px;box-sizing:border-box;box-shadow:0 2px 4px rgba(0,0,0,.35),0 0 2px rgba(0,0,0,.4);"></div>
<span class="t" style="left:2094.90px;top:605.00px;font-size:14.89px;color:#fff;transform:scaleX(1.0049);">Action</span>
<svg class="b" style="left:2144.70px;top:608.05px" width="12" height="6.3" viewBox="0 0 12 6.3"><path d="M0 0H12L6.0 6.3Z" fill="#fff"/></svg>
<div class="b" style="left:2204.80px;top:578.50px;width:43.30px;height:31.20px;background:transparent;border:3px solid #22d3ee;border-radius:15.6px;box-sizing:border-box;box-shadow:0 2px 4px rgba(0,0,0,.35),0 0 2px rgba(0,0,0,.4);"></div>
<svg class="b" style="left:2218.80px;top:586.80px;" width="15.00" height="9.60" viewBox="0 0 15.00 9.60"><path d="M1.25 8.35L7.50 1.55L13.75 8.35" fill="none" stroke="#fff" stroke-width="2.5"/></svg>
<div class="b" style="left:2204.80px;top:614.90px;width:43.30px;height:31.40px;background:transparent;border:3px solid #22d3ee;border-radius:15.7px;box-sizing:border-box;box-shadow:0 2px 4px rgba(0,0,0,.35),0 0 2px rgba(0,0,0,.4);"></div>
<svg class="b" style="left:2218.80px;top:624.50px;" width="15.00" height="9.60" viewBox="0 0 15.00 9.60"><path d="M1.25 1.25L7.50 8.05L13.75 1.25" fill="none" stroke="#fff" stroke-width="2.5"/></svg>
<div class="b" style="left:1078.00px;top:775.00px;width:1182.00px;height:1.00px;background:rgba(255,255,255,.12);"></div>
<span class="t" style="left:1091.71px;top:702.00px;font-size:15.91px;color:#fff;transform:scaleX(0.9691);">Proxy</span>
<span class="t" style="left:1092.09px;top:726.00px;font-size:15.91px;color:#fff;transform:scaleX(1.0104);">Workflow</span>
<div class="b" style="left:1200.30px;top:709.00px;width:43.00px;height:24.60px;background:rgba(255,255,255,.3);border-radius:13px;"></div>
<div class="b" style="left:1199.40px;top:708.80px;width:25.00px;height:25.00px;background:#fff;border-radius:50%;box-shadow:0 2px 4px rgba(0,0,0,.45),0 1px 2px rgba(0,0,0,.3);"></div>
<svg class="b" style="left:1206.00px;top:716.20px;" width="11.20" height="11.20" viewBox="0 0 11.20 11.20"><path d="M1.3 1.3L9.9 9.9M9.9 1.3L1.3 9.9" stroke="#000" stroke-width="2.3" stroke-linecap="round" fill="none"/></svg>
<div class="b" style="left:1285.00px;top:709.00px;width:43.00px;height:24.60px;background:rgba(255,255,255,.3);border-radius:13px;"></div>
<div class="b" style="left:1284.10px;top:708.80px;width:25.00px;height:25.00px;background:#fff;border-radius:50%;box-shadow:0 2px 4px rgba(0,0,0,.45),0 1px 2px rgba(0,0,0,.3);"></div>
<svg class="b" style="left:1290.70px;top:716.20px;" width="11.20" height="11.20" viewBox="0 0 11.20 11.20"><path d="M1.3 1.3L9.9 9.9M9.9 1.3L1.3 9.9" stroke="#000" stroke-width="2.3" stroke-linecap="round" fill="none"/></svg>
<div class="b" style="left:1380.00px;top:709.00px;width:43.00px;height:24.60px;background:rgba(255,255,255,.3);border-radius:13px;"></div>
<div class="b" style="left:1379.10px;top:708.80px;width:25.00px;height:25.00px;background:#fff;border-radius:50%;box-shadow:0 2px 4px rgba(0,0,0,.45),0 1px 2px rgba(0,0,0,.3);"></div>
<svg class="b" style="left:1385.70px;top:716.20px;" width="11.20" height="11.20" viewBox="0 0 11.20 11.20"><path d="M1.3 1.3L9.9 9.9M9.9 1.3L1.3 9.9" stroke="#000" stroke-width="2.3" stroke-linecap="round" fill="none"/></svg>
<div class="b" style="left:1476.60px;top:709.00px;width:43.00px;height:24.60px;background:rgba(255,255,255,.3);border-radius:13px;"></div>
<div class="b" style="left:1475.70px;top:708.80px;width:25.00px;height:25.00px;background:#fff;border-radius:50%;box-shadow:0 2px 4px rgba(0,0,0,.45),0 1px 2px rgba(0,0,0,.3);"></div>
<svg class="b" style="left:1482.30px;top:716.20px;" width="11.20" height="11.20" viewBox="0 0 11.20 11.20"><path d="M1.3 1.3L9.9 9.9M9.9 1.3L1.3 9.9" stroke="#000" stroke-width="2.3" stroke-linecap="round" fill="none"/></svg>
<div class="b" style="left:1557.80px;top:709.00px;width:43.00px;height:24.60px;background:rgba(255,255,255,.3);border-radius:13px;"></div>
<div class="b" style="left:1556.90px;top:708.80px;width:25.00px;height:25.00px;background:#fff;border-radius:50%;box-shadow:0 2px 4px rgba(0,0,0,.45),0 1px 2px rgba(0,0,0,.3);"></div>
<svg class="b" style="left:1563.50px;top:716.20px;" width="11.20" height="11.20" viewBox="0 0 11.20 11.20"><path d="M1.3 1.3L9.9 9.9M9.9 1.3L1.3 9.9" stroke="#000" stroke-width="2.3" stroke-linecap="round" fill="none"/></svg>
<div class="b" style="left:1639.40px;top:708.70px;width:42.20px;height:25.20px;background:#00e0ff;border-radius:13px;"></div>
<div class="b" style="left:1656.80px;top:708.80px;width:25.00px;height:25.00px;background:#fff;border-radius:50%;box-shadow:0 2px 4px rgba(0,0,0,.45),0 1px 2px rgba(0,0,0,.3);"></div>
<span class="t g" style="left:1659.20px;top:709.70px;font-size:24px;color:#000;transform-origin:50% 50%;transform:scaleX(1.07)">✔</span>
<span class="t" style="left:1721.26px;top:722.00px;font-size:19.58px;color:#fff;transform:scaleX(0.9446);">BOOLEAN</span>
<svg class="b" style="left:1853.30px;top:728.15px" width="12" height="6.3" viewBox="0 0 12 6.3"><path d="M0 0H12L6.0 6.3Z" fill="#fff"/></svg>
<div class="b" style="left:1722.00px;top:750.00px;width:152.00px;height:2.00px;background:rgba(255,255,255,.58);"></div>
<div class="b" style="left:1899.00px;top:750.00px;width:45.00px;height:2.00px;background:rgba(255,255,255,.58);"></div>
<div class="b" style="left:1968.00px;top:750.00px;width:87.00px;height:2.00px;background:rgba(255,255,255,.58);"></div>
<div class="b" style="left:1968.3px;top:713.00px;width:86.8px;height:34px;overflow:hidden">
<span class="t" style="left:1.00px;top:9.00px;font-size:19.58px;color:#fff;transform:scaleX(1.0242);">false</span>
</div>
<div class="b" style="left:2079.10px;top:702.50px;width:102.20px;height:37.50px;background:transparent;border:3px solid #22d3ee;border-radius:18.8px;box-sizing:border-box;box-shadow:0 2px 4px rgba(0,0,0,.35),0 0 2px rgba(0,0,0,.4);"></div>
<span class="t" style="left:2094.90px;top:714.00px;font-size:14.89px;color:#fff;transform:scaleX(1.0049);">Action</span>
<svg class="b" style="left:2144.70px;top:717.05px" width="12" height="6.3" viewBox="0 0 12 6.3"><path d="M0 0H12L6.0 6.3Z" fill="#fff"/></svg>
<div class="b" style="left:2204.80px;top:687.50px;width:43.30px;height:31.20px;background:transparent;border:3px solid #22d3ee;border-radius:15.6px;box-sizing:border-box;box-shadow:0 2px 4px rgba(0,0,0,.35),0 0 2px rgba(0,0,0,.4);"></div>
<svg class="b" style="left:2218.80px;top:695.80px;" width="15.00" height="9.60" viewBox="0 0 15.00 9.60"><path d="M1.25 8.35L7.50 1.55L13.75 8.35" fill="none" stroke="#fff" stroke-width="2.5"/></svg>
<div class="b" style="left:2204.80px;top:723.90px;width:43.30px;height:31.40px;background:transparent;border:3px solid #22d3ee;border-radius:15.7px;box-sizing:border-box;box-shadow:0 2px 4px rgba(0,0,0,.35),0 0 2px rgba(0,0,0,.4);"></div>
<svg class="b" style="left:2218.80px;top:733.50px;" width="15.00" height="9.60" viewBox="0 0 15.00 9.60"><path d="M1.25 1.25L7.50 8.05L13.75 1.25" fill="none" stroke="#fff" stroke-width="2.5"/></svg>
<div class="b" style="left:1078.00px;top:884.00px;width:1182.00px;height:1.00px;background:rgba(255,255,255,.12);"></div>
<span class="t" style="left:1091.67px;top:811.00px;font-size:15.91px;color:#fff;transform:scaleX(1.0045);">Date of</span>
<span class="t" style="left:1091.68px;top:835.00px;font-size:15.91px;color:#fff;">Deletion</span>
<div class="b" style="left:1200.30px;top:818.00px;width:43.00px;height:24.60px;background:rgba(255,255,255,.3);border-radius:13px;"></div>
<div class="b" style="left:1199.40px;top:817.80px;width:25.00px;height:25.00px;background:#fff;border-radius:50%;box-shadow:0 2px 4px rgba(0,0,0,.45),0 1px 2px rgba(0,0,0,.3);"></div>
<svg class="b" style="left:1206.00px;top:825.20px;" width="11.20" height="11.20" viewBox="0 0 11.20 11.20"><path d="M1.3 1.3L9.9 9.9M9.9 1.3L1.3 9.9" stroke="#000" stroke-width="2.3" stroke-linecap="round" fill="none"/></svg>
<div class="b" style="left:1285.00px;top:818.00px;width:43.00px;height:24.60px;background:rgba(255,255,255,.3);border-radius:13px;"></div>
<div class="b" style="left:1284.10px;top:817.80px;width:25.00px;height:25.00px;background:#fff;border-radius:50%;box-shadow:0 2px 4px rgba(0,0,0,.45),0 1px 2px rgba(0,0,0,.3);"></div>
<svg class="b" style="left:1290.70px;top:825.20px;" width="11.20" height="11.20" viewBox="0 0 11.20 11.20"><path d="M1.3 1.3L9.9 9.9M9.9 1.3L1.3 9.9" stroke="#000" stroke-width="2.3" stroke-linecap="round" fill="none"/></svg>
<div class="b" style="left:1380.80px;top:817.70px;width:42.20px;height:25.20px;background:#00e0ff;border-radius:13px;"></div>
<div class="b" style="left:1398.20px;top:817.80px;width:25.00px;height:25.00px;background:#fff;border-radius:50%;box-shadow:0 2px 4px rgba(0,0,0,.45),0 1px 2px rgba(0,0,0,.3);"></div>
<span class="t g" style="left:1400.60px;top:818.70px;font-size:24px;color:#000;transform-origin:50% 50%;transform:scaleX(1.07)">✔</span>
<div class="b" style="left:1477.40px;top:817.70px;width:42.20px;height:25.20px;background:#00e0ff;border-radius:13px;"></div>
<div class="b" style="left:1494.80px;top:817.80px;width:25.00px;height:25.00px;background:#fff;border-radius:50%;box-shadow:0 2px 4px rgba(0,0,0,.45),0 1px 2px rgba(0,0,0,.3);"></div>
<span class="t g" style="left:1497.20px;top:818.70px;font-size:24px;color:#000;transform-origin:50% 50%;transform:scaleX(1.07)">✔</span>
<div class="b" style="left:1557.80px;top:818.00px;width:43.00px;height:24.60px;background:rgba(255,255,255,.3);border-radius:13px;"></div>
<div class="b" style="left:1556.90px;top:817.80px;width:25.00px;height:25.00px;background:#fff;border-radius:50%;box-shadow:0 2px 4px rgba(0,0,0,.45),0 1px 2px rgba(0,0,0,.3);"></div>
<svg class="b" style="left:1563.50px;top:825.20px;" width="11.20" height="11.20" viewBox="0 0 11.20 11.20"><path d="M1.3 1.3L9.9 9.9M9.9 1.3L1.3 9.9" stroke="#000" stroke-width="2.3" stroke-linecap="round" fill="none"/></svg>
<div class="b" style="left:1639.40px;top:817.70px;width:42.20px;height:25.20px;background:#00e0ff;border-radius:13px;"></div>
<div class="b" style="left:1656.80px;top:817.80px;width:25.00px;height:25.00px;background:#fff;border-radius:50%;box-shadow:0 2px 4px rgba(0,0,0,.45),0 1px 2px rgba(0,0,0,.3);"></div>
<span class="t g" style="left:1659.20px;top:818.70px;font-size:24px;color:#000;transform-origin:50% 50%;transform:scaleX(1.07)">✔</span>
<span class="t" style="left:1721.24px;top:831.00px;font-size:19.58px;color:#fff;transform:scaleX(0.9525);">DATE</span>
<svg class="b" style="left:1853.30px;top:837.15px" width="12" height="6.3" viewBox="0 0 12 6.3"><path d="M0 0H12L6.0 6.3Z" fill="#fff"/></svg>
<div class="b" style="left:1722.00px;top:859.00px;width:152.00px;height:2.00px;background:rgba(255,255,255,.58);"></div>
<div class="b" style="left:1899.00px;top:859.00px;width:45.00px;height:2.00px;background:rgba(255,255,255,.58);"></div>
<div class="b" style="left:1968.00px;top:859.00px;width:87.00px;height:2.00px;background:rgba(255,255,255,.58);"></div>
<div class="b" style="left:1968.3px;top:822.00px;width:86.8px;height:34px;overflow:hidden">
<span class="t" style="left:0.90px;top:9.00px;font-size:19.58px;color:#fff;transform:scaleX(1.0053);">{helmut.variable}</span>
</div>
<div class="b" style="left:2079.10px;top:811.50px;width:102.20px;height:37.50px;background:transparent;border:3px solid #22d3ee;border-radius:18.8px;box-sizing:border-box;box-shadow:0 2px 4px rgba(0,0,0,.35),0 0 2px rgba(0,0,0,.4);"></div>
<span class="t" style="left:2094.90px;top:823.00px;font-size:14.89px;color:#fff;transform:scaleX(1.0049);">Action</span>
<svg class="b" style="left:2144.70px;top:826.05px" width="12" height="6.3" viewBox="0 0 12 6.3"><path d="M0 0H12L6.0 6.3Z" fill="#fff"/></svg>
<div class="b" style="left:2204.80px;top:796.50px;width:43.30px;height:31.20px;background:transparent;border:3px solid #22d3ee;border-radius:15.6px;box-sizing:border-box;box-shadow:0 2px 4px rgba(0,0,0,.35),0 0 2px rgba(0,0,0,.4);"></div>
<svg class="b" style="left:2218.80px;top:804.80px;" width="15.00" height="9.60" viewBox="0 0 15.00 9.60"><path d="M1.25 8.35L7.50 1.55L13.75 8.35" fill="none" stroke="#fff" stroke-width="2.5"/></svg>
<div class="b" style="left:2204.80px;top:832.90px;width:43.30px;height:31.40px;background:transparent;border:3px solid #22d3ee;border-radius:15.7px;box-sizing:border-box;box-shadow:0 2px 4px rgba(0,0,0,.35),0 0 2px rgba(0,0,0,.4);"></div>
<svg class="b" style="left:2218.80px;top:842.50px;" width="15.00" height="9.60" viewBox="0 0 15.00 9.60"><path d="M1.25 1.25L7.50 8.05L13.75 1.25" fill="none" stroke="#fff" stroke-width="2.5"/></svg>
<div class="b" style="left:1078.00px;top:993.00px;width:1182.00px;height:1.00px;background:rgba(255,255,255,.12);"></div>
<span class="t" style="left:1091.78px;top:908.00px;font-size:15.91px;color:#fff;transform:scaleX(0.9843);">genuine-</span>
<span class="t" style="left:1091.74px;top:932.00px;font-size:15.91px;color:#fff;transform:scaleX(1.0215);">project-</span>
<span class="t" style="left:1091.76px;top:956.00px;font-size:15.91px;color:#fff;transform:scaleX(0.9963);">name</span>
<div class="b" style="left:1201.10px;top:926.70px;width:42.20px;height:25.20px;background:#00e0ff;border-radius:13px;"></div>
<div class="b" style="left:1218.50px;top:926.80px;width:25.00px;height:25.00px;background:#fff;border-radius:50%;box-shadow:0 2px 4px rgba(0,0,0,.45),0 1px 2px rgba(0,0,0,.3);"></div>
<span class="t g" style="left:1220.90px;top:927.70px;font-size:24px;color:#000;transform-origin:50% 50%;transform:scaleX(1.07)">✔</span>
<div class="b" style="left:1285.00px;top:927.00px;width:43.00px;height:24.60px;background:rgba(255,255,255,.3);border-radius:13px;"></div>
<div class="b" style="left:1284.10px;top:926.80px;width:25.00px;height:25.00px;background:#fff;border-radius:50%;box-shadow:0 2px 4px rgba(0,0,0,.45),0 1px 2px rgba(0,0,0,.3);"></div>
<svg class="b" style="left:1290.70px;top:934.20px;" width="11.20" height="11.20" viewBox="0 0 11.20 11.20"><path d="M1.3 1.3L9.9 9.9M9.9 1.3L1.3 9.9" stroke="#000" stroke-width="2.3" stroke-linecap="round" fill="none"/></svg>
<div class="b" style="left:1380.00px;top:927.00px;width:43.00px;height:24.60px;background:rgba(255,255,255,.3);border-radius:13px;"></div>
<div class="b" style="left:1379.10px;top:926.80px;width:25.00px;height:25.00px;background:#fff;border-radius:50%;box-shadow:0 2px 4px rgba(0,0,0,.45),0 1px 2px rgba(0,0,0,.3);"></div>
<svg class="b" style="left:1385.70px;top:934.20px;" width="11.20" height="11.20" viewBox="0 0 11.20 11.20"><path d="M1.3 1.3L9.9 9.9M9.9 1.3L1.3 9.9" stroke="#000" stroke-width="2.3" stroke-linecap="round" fill="none"/></svg>
<div class="b" style="left:1477.40px;top:926.70px;width:42.20px;height:25.20px;background:#00e0ff;border-radius:13px;"></div>
<div class="b" style="left:1494.80px;top:926.80px;width:25.00px;height:25.00px;background:#fff;border-radius:50%;box-shadow:0 2px 4px rgba(0,0,0,.45),0 1px 2px rgba(0,0,0,.3);"></div>
<span class="t g" style="left:1497.20px;top:927.70px;font-size:24px;color:#000;transform-origin:50% 50%;transform:scaleX(1.07)">✔</span>
<div class="b" style="left:1557.80px;top:927.00px;width:43.00px;height:24.60px;background:rgba(255,255,255,.3);border-radius:13px;"></div>
<div class="b" style="left:1556.90px;top:926.80px;width:25.00px;height:25.00px;background:#fff;border-radius:50%;box-shadow:0 2px 4px rgba(0,0,0,.45),0 1px 2px rgba(0,0,0,.3);"></div>
<svg class="b" style="left:1563.50px;top:934.20px;" width="11.20" height="11.20" viewBox="0 0 11.20 11.20"><path d="M1.3 1.3L9.9 9.9M9.9 1.3L1.3 9.9" stroke="#000" stroke-width="2.3" stroke-linecap="round" fill="none"/></svg>
<div class="b" style="left:1638.60px;top:927.00px;width:43.00px;height:24.60px;background:rgba(255,255,255,.3);border-radius:13px;"></div>
<div class="b" style="left:1637.70px;top:926.80px;width:25.00px;height:25.00px;background:#fff;border-radius:50%;box-shadow:0 2px 4px rgba(0,0,0,.45),0 1px 2px rgba(0,0,0,.3);"></div>
<svg class="b" style="left:1644.30px;top:934.20px;" width="11.20" height="11.20" viewBox="0 0 11.20 11.20"><path d="M1.3 1.3L9.9 9.9M9.9 1.3L1.3 9.9" stroke="#000" stroke-width="2.3" stroke-linecap="round" fill="none"/></svg>
<span class="t" style="left:1721.14px;top:940.00px;font-size:19.58px;color:#fff;transform:scaleX(0.9424);">STRING</span>
<svg class="b" style="left:1853.30px;top:946.15px" width="12" height="6.3" viewBox="0 0 12 6.3"><path d="M0 0H12L6.0 6.3Z" fill="#fff"/></svg>
<div class="b" style="left:1722.00px;top:968.00px;width:152.00px;height:2.00px;background:rgba(255,255,255,.58);"></div>
<div class="b" style="left:1899.00px;top:968.00px;width:45.00px;height:2.00px;background:rgba(255,255,255,.58);"></div>
<div class="b" style="left:1968.00px;top:968.00px;width:87.00px;height:2.00px;background:rgba(255,255,255,.58);"></div>
<div class="b" style="left:2079.10px;top:920.50px;width:102.20px;height:37.50px;background:transparent;border:3px solid #22d3ee;border-radius:18.8px;box-sizing:border-box;box-shadow:0 2px 4px rgba(0,0,0,.35),0 0 2px rgba(0,0,0,.4);"></div>
<span class="t" style="left:2094.90px;top:932.00px;font-size:14.89px;color:#fff;transform:scaleX(1.0049);">Action</span>
<svg class="b" style="left:2144.70px;top:935.05px" width="12" height="6.3" viewBox="0 0 12 6.3"><path d="M0 0H12L6.0 6.3Z" fill="#fff"/></svg>
<div class="b" style="left:2204.80px;top:905.50px;width:43.30px;height:31.20px;background:transparent;border:3px solid #22d3ee;border-radius:15.6px;box-sizing:border-box;box-shadow:0 2px 4px rgba(0,0,0,.35),0 0 2px rgba(0,0,0,.4);"></div>
<svg class="b" style="left:2218.80px;top:913.80px;" width="15.00" height="9.60" viewBox="0 0 15.00 9.60"><path d="M1.25 8.35L7.50 1.55L13.75 8.35" fill="none" stroke="#fff" stroke-width="2.5"/></svg>
<div class="b" style="left:2204.80px;top:941.90px;width:43.30px;height:31.40px;background:transparent;border:3px solid #22d3ee;border-radius:15.7px;box-sizing:border-box;box-shadow:0 2px 4px rgba(0,0,0,.35),0 0 2px rgba(0,0,0,.4);"></div>
<svg class="b" style="left:2218.80px;top:951.50px;" width="15.00" height="9.60" viewBox="0 0 15.00 9.60"><path d="M1.25 1.25L7.50 8.05L13.75 1.25" fill="none" stroke="#fff" stroke-width="2.5"/></svg>
<div class="b" style="left:1078.00px;top:1102.00px;width:1182.00px;height:1.00px;background:rgba(255,255,255,.12);"></div>
<span class="t" style="left:1091.60px;top:1041.00px;font-size:15.91px;color:#fff;transform:scaleX(1.0087);">Status</span>
<div class="b" style="left:1200.30px;top:1036.00px;width:43.00px;height:24.60px;background:rgba(255,255,255,.3);border-radius:13px;"></div>
<div class="b" style="left:1199.40px;top:1035.80px;width:25.00px;height:25.00px;background:#fff;border-radius:50%;box-shadow:0 2px 4px rgba(0,0,0,.45),0 1px 2px rgba(0,0,0,.3);"></div>
<svg class="b" style="left:1206.00px;top:1043.20px;" width="11.20" height="11.20" viewBox="0 0 11.20 11.20"><path d="M1.3 1.3L9.9 9.9M9.9 1.3L1.3 9.9" stroke="#000" stroke-width="2.3" stroke-linecap="round" fill="none"/></svg>
<div class="b" style="left:1285.00px;top:1036.00px;width:43.00px;height:24.60px;background:rgba(255,255,255,.3);border-radius:13px;"></div>
<div class="b" style="left:1284.10px;top:1035.80px;width:25.00px;height:25.00px;background:#fff;border-radius:50%;box-shadow:0 2px 4px rgba(0,0,0,.45),0 1px 2px rgba(0,0,0,.3);"></div>
<svg class="b" style="left:1290.70px;top:1043.20px;" width="11.20" height="11.20" viewBox="0 0 11.20 11.20"><path d="M1.3 1.3L9.9 9.9M9.9 1.3L1.3 9.9" stroke="#000" stroke-width="2.3" stroke-linecap="round" fill="none"/></svg>
<div class="b" style="left:1380.00px;top:1036.00px;width:43.00px;height:24.60px;background:rgba(255,255,255,.3);border-radius:13px;"></div>
<div class="b" style="left:1379.10px;top:1035.80px;width:25.00px;height:25.00px;background:#fff;border-radius:50%;box-shadow:0 2px 4px rgba(0,0,0,.45),0 1px 2px rgba(0,0,0,.3);"></div>
<svg class="b" style="left:1385.70px;top:1043.20px;" width="11.20" height="11.20" viewBox="0 0 11.20 11.20"><path d="M1.3 1.3L9.9 9.9M9.9 1.3L1.3 9.9" stroke="#000" stroke-width="2.3" stroke-linecap="round" fill="none"/></svg>
<div class="b" style="left:1477.40px;top:1035.70px;width:42.20px;height:25.20px;background:#00e0ff;border-radius:13px;"></div>
<div class="b" style="left:1494.80px;top:1035.80px;width:25.00px;height:25.00px;background:#fff;border-radius:50%;box-shadow:0 2px 4px rgba(0,0,0,.45),0 1px 2px rgba(0,0,0,.3);"></div>
<span class="t g" style="left:1497.20px;top:1036.70px;font-size:24px;color:#000;transform-origin:50% 50%;transform:scaleX(1.07)">✔</span>
<div class="b" style="left:1557.80px;top:1036.00px;width:43.00px;height:24.60px;background:rgba(255,255,255,.3);border-radius:13px;"></div>
<div class="b" style="left:1556.90px;top:1035.80px;width:25.00px;height:25.00px;background:#fff;border-radius:50%;box-shadow:0 2px 4px rgba(0,0,0,.45),0 1px 2px rgba(0,0,0,.3);"></div>
<svg class="b" style="left:1563.50px;top:1043.20px;" width="11.20" height="11.20" viewBox="0 0 11.20 11.20"><path d="M1.3 1.3L9.9 9.9M9.9 1.3L1.3 9.9" stroke="#000" stroke-width="2.3" stroke-linecap="round" fill="none"/></svg>
<div class="b" style="left:1639.40px;top:1035.70px;width:42.20px;height:25.20px;background:#00e0ff;border-radius:13px;"></div>
<div class="b" style="left:1656.80px;top:1035.80px;width:25.00px;height:25.00px;background:#fff;border-radius:50%;box-shadow:0 2px 4px rgba(0,0,0,.45),0 1px 2px rgba(0,0,0,.3);"></div>
<span class="t g" style="left:1659.20px;top:1036.70px;font-size:24px;color:#000;transform-origin:50% 50%;transform:scaleX(1.07)">✔</span>
<span class="t" style="left:1721.16px;top:1049.00px;font-size:19.58px;color:#fff;transform:scaleX(0.9137);">SELECT</span>
<svg class="b" style="left:1853.30px;top:1055.15px" width="12" height="6.3" viewBox="0 0 12 6.3"><path d="M0 0H12L6.0 6.3Z" fill="#fff"/></svg>
<div class="b" style="left:1722.00px;top:1077.00px;width:152.00px;height:2.00px;background:rgba(255,255,255,.58);"></div>
<div class="b" style="left:1899.00px;top:1077.00px;width:45.00px;height:2.00px;background:rgba(255,255,255,.58);"></div>
<div class="b" style="left:1968.00px;top:1077.00px;width:87.00px;height:2.00px;background:rgba(255,255,255,.58);"></div>
<div class="b" style="left:1898.7px;top:1040.00px;width:45.6px;height:34px;overflow:hidden">
<span class="t" style="left:-0.59px;top:9.00px;font-size:19.58px;color:#fff;transform:scaleX(0.9498);">New,Open</span>
</div>
<div class="b" style="left:1968.3px;top:1040.00px;width:86.8px;height:34px;overflow:hidden">
<span class="t" style="left:-0.33px;top:9.00px;font-size:19.58px;color:#fff;transform:scaleX(0.9759);">New</span>
</div>
<div class="b" style="left:2079.10px;top:1029.50px;width:102.20px;height:37.50px;background:transparent;border:3px solid #22d3ee;border-radius:18.8px;box-sizing:border-box;box-shadow:0 2px 4px rgba(0,0,0,.35),0 0 2px rgba(0,0,0,.4);"></div>
<span class="t" style="left:2094.90px;top:1041.00px;font-size:14.89px;color:#fff;transform:scaleX(1.0049);">Action</span>
<svg class="b" style="left:2144.70px;top:1044.05px" width="12" height="6.3" viewBox="0 0 12 6.3"><path d="M0 0H12L6.0 6.3Z" fill="#fff"/></svg>
<div class="b" style="left:2204.80px;top:1014.50px;width:43.30px;height:31.20px;background:transparent;border:3px solid #22d3ee;border-radius:15.6px;box-sizing:border-box;box-shadow:0 2px 4px rgba(0,0,0,.35),0 0 2px rgba(0,0,0,.4);"></div>
<svg class="b" style="left:2218.80px;top:1022.80px;" width="15.00" height="9.60" viewBox="0 0 15.00 9.60"><path d="M1.25 8.35L7.50 1.55L13.75 8.35" fill="none" stroke="#fff" stroke-width="2.5"/></svg>
<div class="b" style="left:2204.80px;top:1050.90px;width:43.30px;height:31.40px;background:transparent;border:3px solid #22d3ee;border-radius:15.7px;box-sizing:border-box;box-shadow:0 2px 4px rgba(0,0,0,.35),0 0 2px rgba(0,0,0,.4);"></div>
<svg class="b" style="left:2218.80px;top:1060.50px;" width="15.00" height="9.60" viewBox="0 0 15.00 9.60"><path d="M1.25 1.25L7.50 8.05L13.75 1.25" fill="none" stroke="#fff" stroke-width="2.5"/></svg>
<span class="t" style="left:1091.78px;top:1126.00px;font-size:15.91px;color:#fff;transform:scaleX(0.9843);">genuine-</span>
<span class="t" style="left:1091.74px;top:1150.00px;font-size:15.91px;color:#fff;transform:scaleX(1.0215);">project-</span>
<span class="t" style="left:1091.76px;top:1174.00px;font-size:15.91px;color:#fff;transform:scaleX(1.0086);">date</span>
<div class="b" style="left:1201.10px;top:1144.70px;width:42.20px;height:25.20px;background:#00e0ff;border-radius:13px;"></div>
<div class="b" style="left:1218.50px;top:1144.80px;width:25.00px;height:25.00px;background:#fff;border-radius:50%;box-shadow:0 2px 4px rgba(0,0,0,.45),0 1px 2px rgba(0,0,0,.3);"></div>
<span class="t g" style="left:1220.90px;top:1145.70px;font-size:24px;color:#000;transform-origin:50% 50%;transform:scaleX(1.07)">✔</span>
<div class="b" style="left:1285.00px;top:1145.00px;width:43.00px;height:24.60px;background:rgba(255,255,255,.3);border-radius:13px;"></div>
<div class="b" style="left:1284.10px;top:1144.80px;width:25.00px;height:25.00px;background:#fff;border-radius:50%;box-shadow:0 2px 4px rgba(0,0,0,.45),0 1px 2px rgba(0,0,0,.3);"></div>
<svg class="b" style="left:1290.70px;top:1152.20px;" width="11.20" height="11.20" viewBox="0 0 11.20 11.20"><path d="M1.3 1.3L9.9 9.9M9.9 1.3L1.3 9.9" stroke="#000" stroke-width="2.3" stroke-linecap="round" fill="none"/></svg>
<div class="b" style="left:1380.00px;top:1145.00px;width:43.00px;height:24.60px;background:rgba(255,255,255,.3);border-radius:13px;"></div>
<div class="b" style="left:1379.10px;top:1144.80px;width:25.00px;height:25.00px;background:#fff;border-radius:50%;box-shadow:0 2px 4px rgba(0,0,0,.45),0 1px 2px rgba(0,0,0,.3);"></div>
<svg class="b" style="left:1385.70px;top:1152.20px;" width="11.20" height="11.20" viewBox="0 0 11.20 11.20"><path d="M1.3 1.3L9.9 9.9M9.9 1.3L1.3 9.9" stroke="#000" stroke-width="2.3" stroke-linecap="round" fill="none"/></svg>
<div class="b" style="left:1477.40px;top:1144.70px;width:42.20px;height:25.20px;background:#00e0ff;border-radius:13px;"></div>
<div class="b" style="left:1494.80px;top:1144.80px;width:25.00px;height:25.00px;background:#fff;border-radius:50%;box-shadow:0 2px 4px rgba(0,0,0,.45),0 1px 2px rgba(0,0,0,.3);"></div>
<span class="t g" style="left:1497.20px;top:1145.70px;font-size:24px;color:#000;transform-origin:50% 50%;transform:scaleX(1.07)">✔</span>
<div class="b" style="left:1557.80px;top:1145.00px;width:43.00px;height:24.60px;background:rgba(255,255,255,.3);border-radius:13px;"></div>
<div class="b" style="left:1556.90px;top:1144.80px;width:25.00px;height:25.00px;background:#fff;border-radius:50%;box-shadow:0 2px 4px rgba(0,0,0,.45),0 1px 2px rgba(0,0,0,.3);"></div>
<svg class="b" style="left:1563.50px;top:1152.20px;" width="11.20" height="11.20" viewBox="0 0 11.20 11.20"><path d="M1.3 1.3L9.9 9.9M9.9 1.3L1.3 9.9" stroke="#000" stroke-width="2.3" stroke-linecap="round" fill="none"/></svg>
<div class="b" style="left:1638.60px;top:1145.00px;width:43.00px;height:24.60px;background:rgba(255,255,255,.3);border-radius:13px;"></div>
<div class="b" style="left:1637.70px;top:1144.80px;width:25.00px;height:25.00px;background:#fff;border-radius:50%;box-shadow:0 2px 4px rgba(0,0,0,.45),0 1px 2px rgba(0,0,0,.3);"></div>
<svg class="b" style="left:1644.30px;top:1152.20px;" width="11.20" height="11.20" viewBox="0 0 11.20 11.20"><path d="M1.3 1.3L9.9 9.9M9.9 1.3L1.3 9.9" stroke="#000" stroke-width="2.3" stroke-linecap="round" fill="none"/></svg>
<span class="t" style="left:1721.14px;top:1158.00px;font-size:19.58px;color:#fff;transform:scaleX(0.9424);">STRING</span>
<svg class="b" style="left:1853.30px;top:1164.15px" width="12" height="6.3" viewBox="0 0 12 6.3"><path d="M0 0H12L6.0 6.3Z" fill="#fff"/></svg>
<div class="b" style="left:1722.00px;top:1186.00px;width:152.00px;height:2.00px;background:rgba(255,255,255,.58);"></div>
<div class="b" style="left:1899.00px;top:1186.00px;width:45.00px;height:2.00px;background:rgba(255,255,255,.58);"></div>
<div class="b" style="left:1968.00px;top:1186.00px;width:87.00px;height:2.00px;background:rgba(255,255,255,.58);"></div>
<div class="b" style="left:2079.10px;top:1138.50px;width:102.20px;height:37.50px;background:transparent;border:3px solid #22d3ee;border-radius:18.8px;box-sizing:border-box;box-shadow:0 2px 4px rgba(0,0,0,.35),0 0 2px rgba(0,0,0,.4);"></div>
<span class="t" style="left:2094.90px;top:1150.00px;font-size:14.89px;color:#fff;transform:scaleX(1.0049);">Action</span>
<svg class="b" style="left:2144.70px;top:1153.05px" width="12" height="6.3" viewBox="0 0 12 6.3"><path d="M0 0H12L6.0 6.3Z" fill="#fff"/></svg>
<div class="b" style="left:2204.80px;top:1123.50px;width:43.30px;height:31.20px;background:transparent;border:3px solid #22d3ee;border-radius:15.6px;box-sizing:border-box;box-shadow:0 2px 4px rgba(0,0,0,.35),0 0 2px rgba(0,0,0,.4);"></div>
<svg class="b" style="left:2218.80px;top:1131.80px;" width="15.00" height="9.60" viewBox="0 0 15.00 9.60"><path d="M1.25 8.35L7.50 1.55L13.75 8.35" fill="none" stroke="#fff" stroke-width="2.5"/></svg>
<div class="b" style="left:2204.80px;top:1159.90px;width:43.30px;height:31.40px;background:transparent;border:3px solid #22d3ee;border-radius:15.7px;box-sizing:border-box;box-shadow:0 2px 4px rgba(0,0,0,.35),0 0 2px rgba(0,0,0,.4);"></div>
<svg class="b" style="left:2218.80px;top:1169.50px;" width="15.00" height="9.60" viewBox="0 0 15.00 9.60"><path d="M1.25 1.25L7.50 8.05L13.75 1.25" fill="none" stroke="#fff" stroke-width="2.5"/></svg>
<div class="b" style="left:1078.00px;top:1211.00px;width:1182.00px;height:2.00px;background:rgba(255,255,255,.14);"></div>
<span class="t" style="left:1792.14px;top:1242.00px;font-size:14.69px;color:rgba(255,255,255,.75);transform:scaleX(0.9880);">Rows per page:</span>
<span class="t" style="left:1934.18px;top:1241.00px;font-size:15.5px;color:#fff;transform:scaleX(0.9613);">10</span>
<svg class="b" style="left:1969.00px;top:1245.70px" width="13" height="7" viewBox="0 0 13 7"><path d="M0 0H13L6.5 7Z" fill="#fff"/></svg>
<div class="b" style="left:1934.00px;top:1268.00px;width:56.00px;height:2.00px;background:rgba(255,255,255,.58);"></div>
<span class="t" style="left:2036.60px;top:1242.00px;font-size:14.69px;color:rgba(255,255,255,.75);">1-9 of 9</span>
<svg class="b" style="left:2152.00px;top:1240.00px;" width="9.40" height="13.80" viewBox="0 0 9.40 13.80"><path d="M8.25 1.15L1.45 6.90L8.25 12.65" fill="none" stroke="#6a6a6a" stroke-width="2.3"/></svg>
<svg class="b" style="left:2223.80px;top:1240.00px;" width="9.40" height="13.80" viewBox="0 0 9.40 13.80"><path d="M1.15 1.15L7.95 6.90L1.15 12.65" fill="none" stroke="#6a6a6a" stroke-width="2.3"/></svg>
</div>
</body></html>
